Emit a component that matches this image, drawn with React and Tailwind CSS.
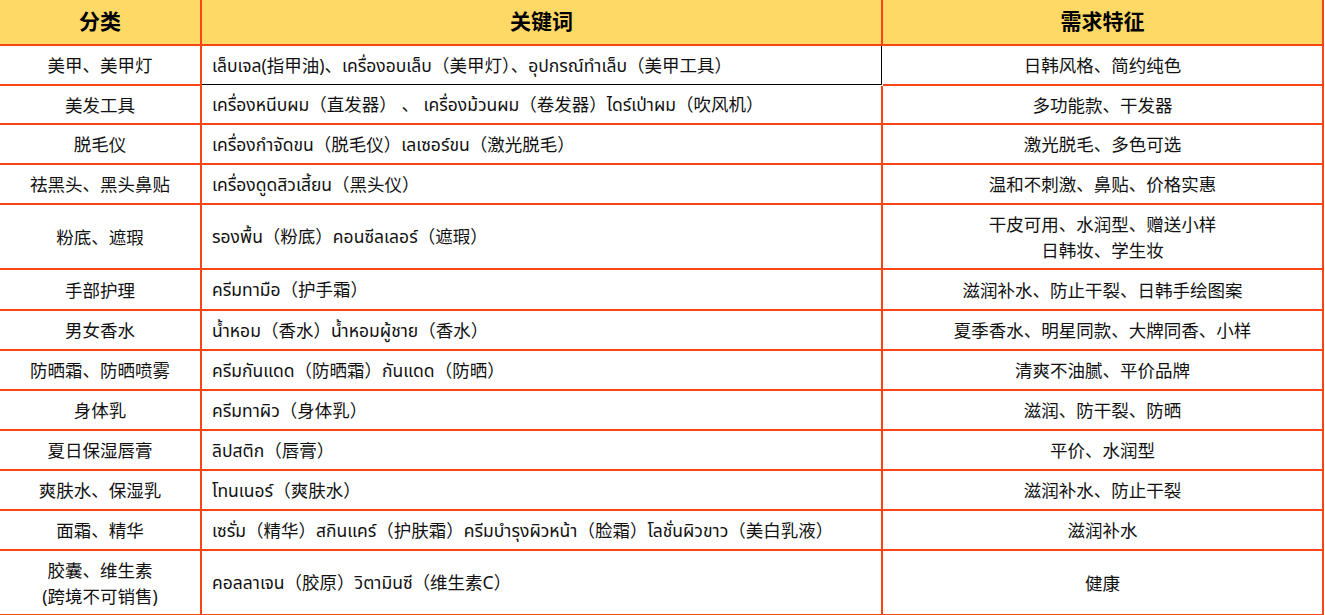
const rows = [
  {
    category: ["美甲、美甲灯"],
    keywords: "เล็บเจล(指甲油)、เครื่องอบเล็บ（美甲灯）、อุปกรณ์ทำเล็บ（美甲工具）",
    features: ["日韩风格、简约纯色"],
    h: "h-[40px]",
    selected: true,
  },
  {
    category: ["美发工具"],
    keywords: "เครื่องหนีบผม（直发器） 、 เครื่องม้วนผม（卷发器）ไดร์เป่าผม（吹风机）",
    features: ["多功能款、干发器"],
    h: "h-[39px]",
  },
  {
    category: ["脱毛仪"],
    keywords: "เครื่องกำจัดขน（脱毛仪）เลเซอร์ขน（激光脱毛）",
    features: ["激光脱毛、多色可选"],
    h: "h-[40px]",
  },
  {
    category: ["祛黑头、黑头鼻贴"],
    keywords: "เครื่องดูดสิวเสี้ยน（黑头仪）",
    features: ["温和不刺激、鼻贴、价格实惠"],
    h: "h-[40px]",
  },
  {
    category: ["粉底、遮瑕"],
    keywords: "รองพื้น（粉底）คอนซีลเลอร์（遮瑕）",
    features: ["干皮可用、水润型、赠送小样", "日韩妆、学生妆"],
    h: "h-[65px]",
  },
  {
    category: ["手部护理"],
    keywords: "ครีมทามือ（护手霜）",
    features: ["滋润补水、防止干裂、日韩手绘图案"],
    h: "h-[41px]",
  },
  {
    category: ["男女香水"],
    keywords: "น้ำหอม（香水）น้ำหอมผู้ชาย（香水）",
    features: ["夏季香水、明星同款、大牌同香、小样"],
    h: "h-[40px]",
  },
  {
    category: ["防晒霜、防晒喷雾"],
    keywords: "ครีมกันแดด（防晒霜）กันแดด（防晒）",
    features: ["清爽不油腻、平价品牌"],
    h: "h-[40px]",
  },
  {
    category: ["身体乳"],
    keywords: "ครีมทาผิว（身体乳）",
    features: ["滋润、防干裂、防晒"],
    h: "h-[40px]",
  },
  {
    category: ["夏日保湿唇膏"],
    keywords: "ลิปสติก（唇膏）",
    features: ["平价、水润型"],
    h: "h-[40px]",
  },
  {
    category: ["爽肤水、保湿乳"],
    keywords: "โทนเนอร์（爽肤水）",
    features: ["滋润补水、防止干裂"],
    h: "h-[40px]",
  },
  {
    category: ["面霜、精华"],
    keywords: "เซรั่ม（精华）สกินแคร์（护肤霜）ครีมบำรุงผิวหน้า（脸霜）โลชั่นผิวขาว（美白乳液）",
    features: ["滋润补水"],
    h: "h-[40px]",
  },
  {
    category: ["胶囊、维生素", "(跨境不可销售)"],
    keywords: "คอลลาเจน（胶原）วิตามินซี（维生素C）",
    features: ["健康"],
    h: "h-[65px]",
  },
];

const font = {
  fontFamily:
    '"Noto Sans", "Noto Sans Thai", "Noto Sans CJK SC", sans-serif',
};

const App = () => {
  return (
    <div
      className="h-screen w-full overflow-hidden bg-white text-[17.5px] text-[#111]"
      style={font}
    >
      <div className="w-[1324px]">
        {/* Header */}
        <div className="grid grid-cols-[202px_681px_441px] h-[46px] bg-[#ffd966] font-bold text-[21px] text-black">
          <div className="flex items-center justify-center border-r-2 border-b-2 border-[#f94413]">
            分类
          </div>
          <div className="flex items-center justify-center border-r-2 border-b-2 border-[#f94413]">
            关键词
          </div>
          <div className="flex items-center justify-center border-r-2 border-b-2 border-[#f94413]">
            需求特征
          </div>
        </div>

        {/* Rows */}
        {rows.map((row, i) => (
          <div
            key={i}
            className={`grid grid-cols-[202px_681px_441px] ${row.h}`}
          >
            <div className="flex flex-col items-center justify-center leading-[26px] border-r-2 border-b-2 border-[#f94413]">
              {row.category.map((line) => (
                <span key={line}>{line}</span>
              ))}
            </div>
            {row.selected ? (
              <div className="flex items-center pl-[10px] border-r border-b border-black mr-px mb-px whitespace-pre">
                {row.keywords}
              </div>
            ) : (
              <div className="flex items-center pl-[10px] border-r-2 border-b-2 border-[#f94413] whitespace-pre">
                {row.keywords}
              </div>
            )}
            <div className="flex flex-col items-center justify-center leading-[26px] border-r-2 border-b-2 border-[#f94413]">
              {row.features.map((line) => (
                <span key={line}>{line}</span>
              ))}
            </div>
          </div>
        ))}
      </div>
    </div>
  );
};

export default App;
